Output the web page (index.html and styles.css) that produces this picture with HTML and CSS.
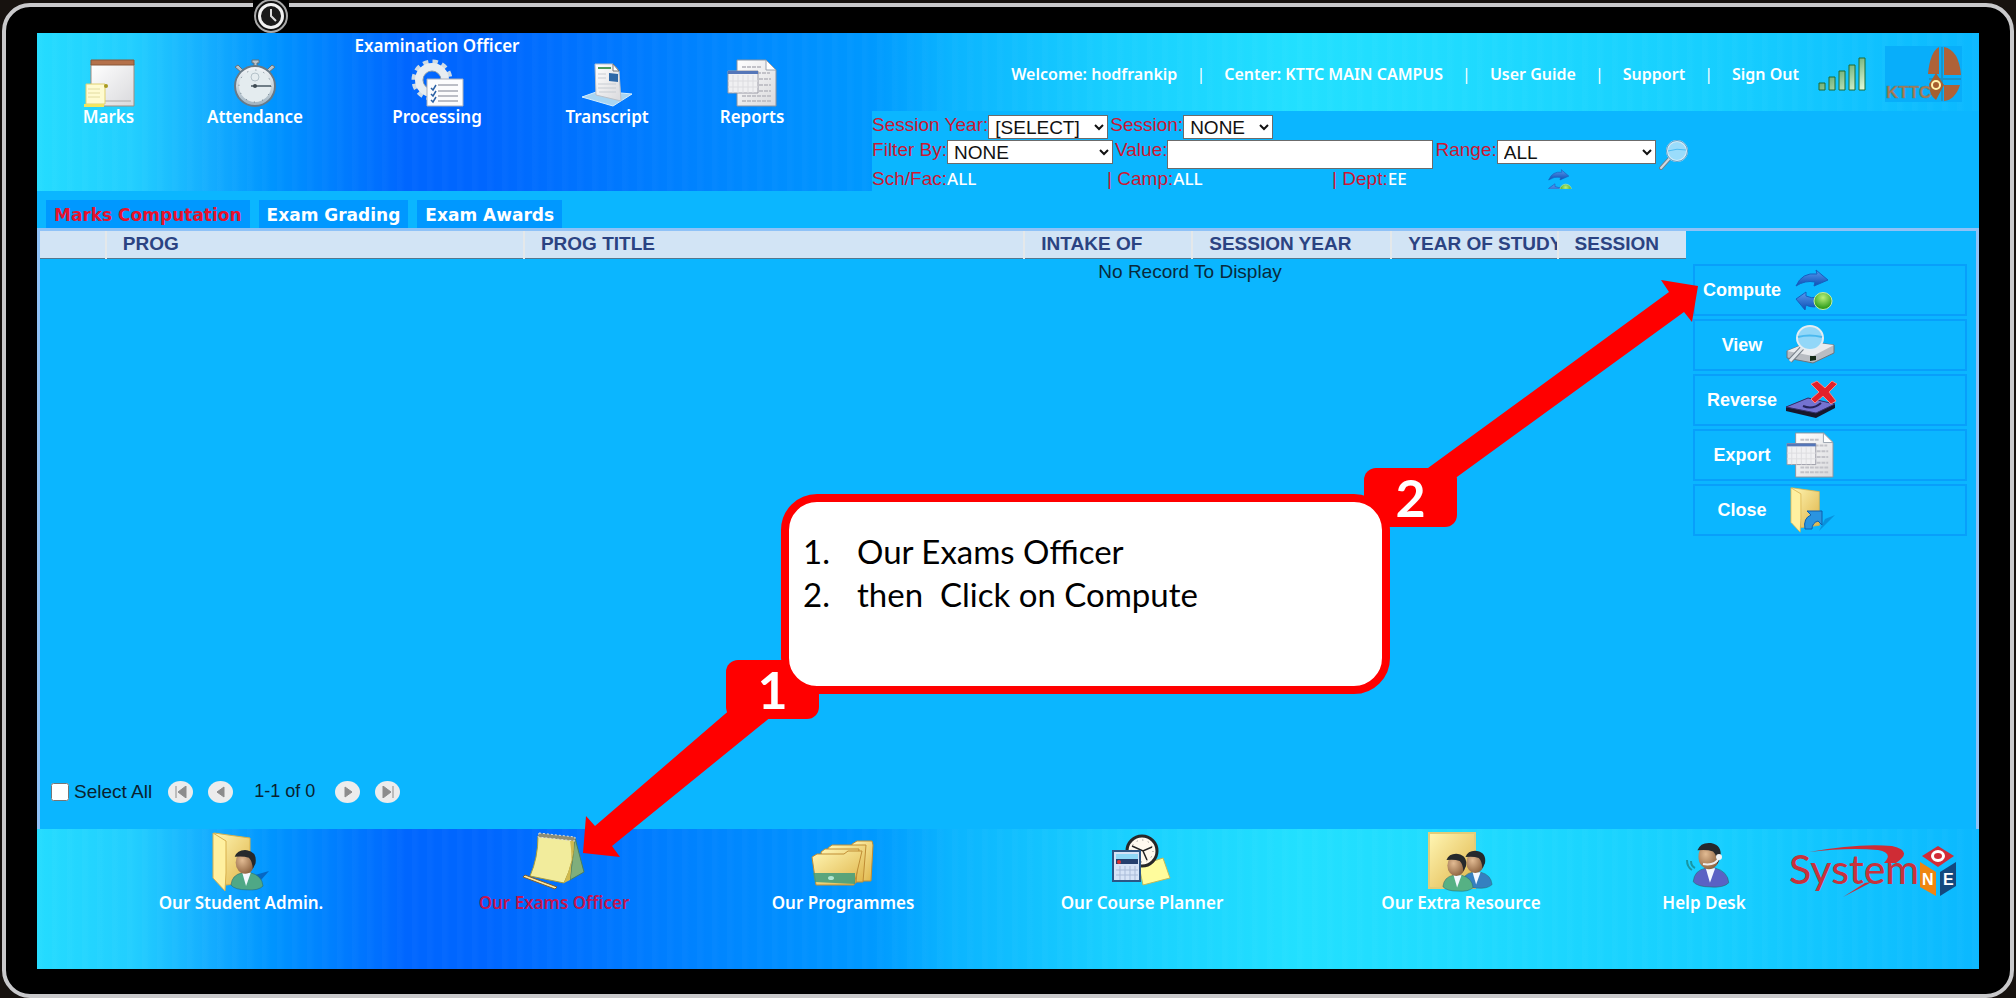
FILE: index.html
```html
<!DOCTYPE html>
<html lang="en">
<head>
<meta charset="utf-8">
<title>Examination Officer</title>
<link rel="stylesheet" href="styles.css">
</head>
<body>
<svg class="defs" aria-hidden="true">
  <defs>
    <linearGradient id="paper" x1="0" y1="0" x2="1" y2="1"><stop offset="0" stop-color="#fff"/><stop offset="1" stop-color="#d9d9dc"/></linearGradient>
    <linearGradient id="yellow" x1="0" y1="0" x2="1" y2="1"><stop offset="0" stop-color="#fff6b4"/><stop offset="1" stop-color="#dfb448"/></linearGradient>
    <linearGradient id="steel" x1="0" y1="0" x2="0" y2="1"><stop offset="0" stop-color="#f6f8fa"/><stop offset="1" stop-color="#9fb2bf"/></linearGradient>
    <linearGradient id="blue" x1="0" y1="0" x2="0" y2="1"><stop offset="0" stop-color="#5a9af0"/><stop offset="1" stop-color="#0d4fb4"/></linearGradient>
    <linearGradient id="green" x1="0" y1="0" x2="1" y2="1"><stop offset="0" stop-color="#1d7a30"/><stop offset="1" stop-color="#e8ffe0"/></linearGradient>
    <radialGradient id="ball" cx=".5" cy=".3" r=".7"><stop offset="0" stop-color="#b9f07a"/><stop offset="1" stop-color="#1f9410"/></radialGradient>
    <radialGradient id="skin" cx=".35" cy=".4" r=".8"><stop offset="0" stop-color="#e2bb93"/><stop offset="1" stop-color="#7a4e2c"/></radialGradient>
    <symbol id="report" viewBox="0 0 50 48">
      <path d="M10 1h29l10 10v36H10z" fill="url(#paper)" stroke="#8b93a0"/>
      <path d="M39 1v10h10z" fill="#fff" stroke="#9aa2ad"/>
      <path d="M15 8h20M15 14h28M32 20h12M32 26h12M32 32h12M15 37h29M15 42h29" stroke="#c2c2c8" stroke-width="2" stroke-dasharray="4 1"/>
      <path d="M1 12h30v22H1z" fill="#f0f0f2" stroke="#9a9aa5"/>
      <path d="M1 12h30v3H1z" fill="#5576b8"/>
      <path d="M6 16v18M11 16v18M16 16v18M21 16v18M26 16v18M1 22h30M1 28h30" stroke="#dcdce0"/>
    </symbol>
    <symbol id="sync" viewBox="0 0 38 42">
      <path d="M1 17Q7 3 22 5L21 1l12 10-14 6 1-4Q10 11 1 17z" fill="url(#blue)" stroke="#1560c0"/>
      <path d="M1 30l10-7v4q6 3 11 1l-2 10q-6 0-9-2l-1 5z" fill="url(#blue)" stroke="#1560c0"/>
      <ellipse cx="28" cy="32" rx="9" ry="8.500" fill="url(#ball)" stroke="#c7eea0"/>
    </symbol>
    <symbol id="folder" viewBox="0 0 40 60">
      <path d="M2 1l36 5v44l-24 3z" fill="url(#yellow)" stroke="#d8b04c"/>
      <path d="M1 1l13 8v32l-1 18L1 46z" fill="#fff0a0" stroke="#d8b04c"/>
    </symbol>
    <symbol id="person" viewBox="0 0 36 44">
      <path d="M1 38q1-11 12-13h9q12 3 13 14-5 5-17 4-13 0-17-5z" fill="currentColor" stroke="#2c6a72" stroke-width=".6"/>
      <path d="M13 25l4 14 5-14z" fill="#f4f8ff"/>
      <ellipse cx="16" cy="14" rx="10" ry="12" fill="url(#skin)"/>
      <path d="M5 8Q8 0 18 1q11 2 9 14l-3 6q0-8-4-12-6-2-15-1z" fill="#26292c"/>
    </symbol>
  </defs>
</svg>

<div class="device">
  <svg class="knob" viewBox="0 0 36 34" aria-hidden="true">
    <circle cx="18" cy="17" r="16" fill="#111" stroke="#aaa" stroke-width="2"/>
    <circle cx="18" cy="17" r="11.500" fill="#1b1b1b" stroke="#f2f2f2" stroke-width="3"/>
    <path d="M18 10v7l5 5" fill="none" stroke="#ddd" stroke-width="2"/>
  </svg>

  <div class="screen">
    <header class="header">
      <nav class="modules" aria-label="Modules">
        <a href="#marks"><span class="role"></span>
          <svg width="52" height="48" viewBox="0 0 52 48" aria-hidden="true"><path d="M8 5h43v42H8z" fill="url(#paper)" stroke="#a08d80"/><path d="M8 1h43v5H8z" fill="#b4714a" stroke="#8a5838"/><path d="M22 42h26" stroke="#aaa"/><path d="M3 25h19v20H3z" fill="#fffbd0" stroke="#e0d070"/><path d="M1 45h20v3H1z" fill="#f4e560"/><path d="M5 30h12M5 34h12M5 38h12" stroke="#e2dca0"/><circle cx="23" cy="27" r="2" fill="#a89a20"/></svg>
          Marks</a>
        <a href="#attendance"><span class="role"></span>
          <svg width="46" height="48" viewBox="0 0 46 48" aria-hidden="true"><path d="M20 1h7v3h-2v4h-3V4h-2zM3 8l3-2 6 6-2 2zM43 8l-3-2-6 6 2 2z" fill="#b9c4cc" stroke="#64727c"/><circle cx="23" cy="27" r="20" fill="url(#steel)" stroke="#687986" stroke-width="2"/><circle cx="23" cy="27" r="16" fill="#e4ecef" stroke="#6c7c87" stroke-dasharray="1 7.370"/><circle cx="23" cy="18" r="4" fill="none" stroke="#b4c2c9"/><path d="M19 27h20" stroke="#4a5a64" stroke-width="1.500"/><circle cx="23" cy="27" r="2" fill="#3d4a52"/></svg>
          Attendance</a>
        <a href="#processing"><span class="role">Examination Officer</span>
          <svg width="54" height="48" viewBox="0 0 54 48" aria-hidden="true"><circle cx="22" cy="21" r="18" fill="none" stroke="#cfdbe4" stroke-width="5" stroke-dasharray="5.300 4.120"/><circle cx="22" cy="21" r="13" fill="none" stroke="#e7edf1" stroke-width="8"/><circle cx="22" cy="21" r="9" fill="none" stroke="#8197ad"/><path d="M17 20h36v27H17z" fill="#fcfcfd" stroke="#a9afba"/><path d="M28 26h20M28 32h20M28 37h20M28 42h20" stroke="#a7a9b4" stroke-width="1.500"/><path d="M21 29l2 2 3-5M21 35l2 2 3-5M21 41l2 2 3-5" fill="none" stroke="#2d62a5" stroke-width="1.500"/></svg>
          Processing</a>
        <a href="#transcript"><span class="role"></span>
          <svg width="52" height="48" viewBox="0 0 52 48" aria-hidden="true"><path d="M1 38l17-6 33 3-19 12z" fill="#a8d5f2" stroke="#d7eefb"/><path d="M14 5h18l6 7 2 30-25-6z" fill="url(#paper)" stroke="#b9c0c8"/><path d="M32 5v7h6z" fill="#fff" stroke="#777"/><path d="M17 9h13" stroke="#4b9a5c" stroke-width="2"/><path d="M28 14l9 1v8l-9-1z" fill="#2e69a8"/><path d="M17 15h8M17 19h8M17 25h18M17 29h18M18 33h17" stroke="#c7ccd2"/></svg>
          Transcript</a>
        <a href="#reports"><span class="role"></span>
          <svg width="50" height="48" aria-hidden="true"><use href="#report"/></svg>
          Reports</a>
      </nav>

      <div class="header-side">
        <div class="userbar">
          <span>Welcome: hodfrankip</span><i>|</i>
          <span>Center: KTTC MAIN CAMPUS</span><i>|</i>
          <a href="#guide">User Guide</a><i>|</i>
          <a href="#support">Support</a><i>|</i>
          <a href="#signout">Sign Out</a>
          <svg class="signal" width="48" height="34" viewBox="0 0 48 34" aria-hidden="true"><g fill="url(#green)" stroke="#1c6b35"><path d="M1 26h6v7H1zM11 20h6v13h-6zM21 14h6v19h-6zM31 8h6v25h-6zM41 1h6v32h-6z"/></g></svg>
          <svg width="77" height="56" viewBox="0 0 77 56" role="img" aria-label="KTTC"><path d="M0 0h77v56H0z" fill="#08aefa"/><path d="M54 1q-9 5-11 27h11zM59 1q15 3 17 28H59zM59 39h16q-5 15-16 16z" fill="#ae6238"/><path d="M57 1v54M44 33h32" stroke="#1a94c8" stroke-width="2"/><path d="M51 27l8 12-8 15q-7-5-7-16z" fill="#a65f30"/><circle cx="51" cy="39" r="4" fill="none" stroke="#fff3ac" stroke-width="2"/><text x="1" y="52" font-family="Liberation Sans, sans-serif" font-size="17" fill="#b07a4c" stroke="#607f86" stroke-width=".5">KTTC</text></svg>
        </div>

        <form class="filters">
          <div class="filter-row">
            <label for="year">Session Year:</label><select id="year" class="w-year"><option>[SELECT]</option></select>
            <label for="session" class="near">Session:</label><select id="session" class="w-session"><option>NONE</option></select>
          </div>
          <div class="filter-row">
            <label for="filter">Filter By:</label><select id="filter" class="w-filter"><option>NONE</option></select>
            <label for="value" class="near">Value:</label><input id="value" type="text" class="w-value">
            <label for="range" class="near">Range:</label><select id="range" class="w-range"><option>ALL</option></select>
            <button type="button" class="plain" aria-label="Search"><svg width="30" height="30" viewBox="0 0 30 30" aria-hidden="true"><path d="M2 28l9-10" stroke="#6f7f8c" stroke-width="4" stroke-linecap="round"/><path d="M2 28l9-10" stroke="#cfd8df" stroke-width="2" stroke-linecap="round"/><circle cx="18" cy="11" r="10" fill="#9adcfb" stroke="#d8ecf6" stroke-width="2"/><circle cx="18" cy="11" r="10.500" fill="none" stroke="#5b9fca"/><path d="M9 11q9-3 18-1" stroke="#4fbdf3" fill="none"/></svg></button>
          </div>
          <div class="scope">
            <span>Sch/Fac:<b>ALL</b></span>
            <span>| Camp:<b>ALL</b></span>
            <span>| Dept:<b>EE</b></span>
            <button type="button" class="plain" aria-label="Refresh"><svg width="24" height="20" viewBox="0 0 38 31" preserveAspectRatio="none" aria-hidden="true"><use href="#sync" width="38" height="42"/></svg></button>
          </div>
        </form>
      </div>
    </header>

    <nav class="tabs" aria-label="Views">
      <a href="#computation" class="active">Marks Computation</a>
      <a href="#grading">Exam Grading</a>
      <a href="#awards">Exam Awards</a>
    </nav>

    <main class="workspace">
      <div class="list">
        <table>
          <colgroup><col class="c1"><col class="c2"><col class="c3"><col class="c4"><col class="c5"><col class="c6"><col class="c7"></colgroup>
          <thead><tr><th></th><th>PROG</th><th>PROG TITLE</th><th>INTAKE OF</th><th>SESSION YEAR</th><th>YEAR OF STUDY</th><th>SESSION</th></tr></thead>
          <tbody><tr><td colspan="3"></td><td colspan="4" class="empty">No Record To Display</td></tr></tbody>
        </table>
        <div class="pager">
          <input type="checkbox" id="all"><label for="all">Select All</label>
          <button type="button" aria-label="First page"><svg width="12" height="12" viewBox="0 0 12 12"><path d="M1 0v12M11 0v12L3 6z"/></svg></button>
          <button type="button" aria-label="Previous page"><svg width="12" height="12" viewBox="0 0 12 12"><path d="M9 1v10L2 6z"/></svg></button>
          <span>1-1 of 0</span>
          <button type="button" aria-label="Next page"><svg width="12" height="12" viewBox="0 0 12 12"><path d="M3 1v10l7-5z"/></svg></button>
          <button type="button" aria-label="Last page"><svg width="12" height="12" viewBox="0 0 12 12"><path d="M11 0v12M1 0v12l8-6z"/></svg></button>
        </div>
      </div>

      <aside class="actions">
        <button type="button"><span>Compute</span><svg width="50" height="42" viewBox="0 0 50 42" aria-hidden="true"><use href="#sync" x="10" width="38" height="42"/></svg></button>
        <button type="button"><span>View</span><svg width="50" height="40" viewBox="0 0 50 40" aria-hidden="true"><path d="M2 26l22-9 25 3v8L28 38 2 33z" fill="#b8bcc2" stroke="#6d737b"/><path d="M2 26l22-9 25 3-21 11z" fill="#e9ebee"/><path d="M25 31l6 0v4l-6 1z" fill="#142a16"/><path d="M5 36l13-14" stroke="#737c86" stroke-width="5"/><path d="M5 36l13-14" stroke="#dfe5ea" stroke-width="3"/><ellipse cx="25" cy="13" rx="13" ry="12" fill="#92d7f8" stroke="#e5edf2" stroke-width="2"/><path d="M13 12q11-3 24 0" stroke="#4ab9ef" stroke-width="2" fill="none"/></svg></button>
        <button type="button"><span>Reverse</span><svg width="52" height="40" viewBox="0 0 52 40" aria-hidden="true"><path d="M1 27l22-9 27 6v4L31 38 1 31z" fill="#17172c"/><path d="M1 27l22-9 27 6-19 9z" fill="#7472d0" stroke="#33306c"/><path d="M18 26q10 4 18-3" stroke="#25235c" stroke-width="2" fill="none"/><path d="M26 4l6-3 8 7 7-7 5 3-8 8 7 9-5 3-8-8-8 7-4-4 8-7z" fill="#e3202a" stroke="#f28a8a"/></svg></button>
        <button type="button"><span>Export</span><svg width="50" height="46" aria-hidden="true"><use href="#report"/></svg></button>
        <button type="button"><span>Close</span><svg width="50" height="46" viewBox="0 0 50 46" aria-hidden="true"><use href="#folder" x="5" width="31" height="46"/><path d="M34 44l16-16-10 4z" fill="#0878c4" opacity=".6"/><path d="M20 42q-2-11 6-14l-4-4h15v14l-4-4q-6 2-6 8z" fill="#2a94e0" stroke="#0d5fae"/></svg></button>
      </aside>
    </main>

    <footer class="footer">
      <a href="#student"><svg width="58" height="60" viewBox="0 0 58 60" aria-hidden="true"><path d="M42 56l15-17-14 4z" fill="#06469c" opacity=".6"/><use href="#folder" width="40" height="60"/><use href="#person" x="18" y="17" width="34" height="42" color="#4fa886"/></svg>Our Student Admin.</a>
      <a href="#exams" class="active"><svg width="64" height="60" viewBox="0 0 64 60" aria-hidden="true"><path d="M53 6l9 34-14 8z" fill="#7fae7c" stroke="#487d60"/><path d="M16 4l36 3q1 22-10 44l-34-7Q16 26 16 4z" fill="#f2ec9c" stroke="#a79c3c"/><path d="M48 8q3 20 0 40l-6 3Q52 28 52 7z" fill="#d0b94e"/><path d="M17 1l36 4v4L16 5z" fill="#8e8e74" stroke="#ddd" stroke-dasharray="2 2"/><path d="M1 45l32 12 2-2L3 43z" fill="#ffe79a" stroke="#7b5c30"/></svg>Our Exams Officer</a>
      <a href="#programmes"><svg width="64" height="60" viewBox="0 0 64 60" aria-hidden="true"><g fill="url(#yellow)" stroke="#c08d34"><path d="M41 12l5-3h15l1 4-2 36H41z"/><path d="M17 16l4-3h34l-3 37H20z"/><path d="M10 20l4-3h34l-3 34H14z"/><path d="M1 25l5-3h27l4-3h14l-8 34H5z"/></g><path d="M2 41h42v11L4 50z" fill="#3f9c7c" opacity=".85"/><ellipse cx="20" cy="46" rx="3" ry="2" fill="#b0e5d2"/></svg>Our Programmes</a>
      <a href="#planner"><svg width="60" height="60" viewBox="0 0 60 60" aria-hidden="true"><path d="M27 34l24-8 7 20-27 7z" fill="#fffc9c" stroke="#c2ba58"/><circle cx="30" cy="19" r="15" fill="#fff9ee" stroke="#282828" stroke-width="3"/><circle cx="30" cy="19" r="11" fill="none" stroke="#777" stroke-dasharray="1 4.760"/><path d="M20 14l11 5 9-4M31 19l4 9" stroke="#222" stroke-width="1.500" fill="none"/><path d="M1 19h27v30H1z" fill="#d6e3f6" stroke="#2d5685" stroke-width="2"/><path d="M4 22h22v5H4z" fill="#8fd8f6"/><path d="M4 27h22v5H4z" fill="#243f6e"/><circle cx="7" cy="30" r="2" fill="#d33"/><path d="M8 34v14M13 34v14M18 34v14M23 34v14M4 38h22M4 43h22" stroke="#a9bbd8"/></svg>Our Course Planner</a>
      <a href="#resource"><svg width="66" height="60" viewBox="0 0 66 60" aria-hidden="true"><path d="M1 1h46v55H1z" fill="url(#yellow)" stroke="#e2cc78" stroke-width="2"/><use href="#person" x="33" y="18" width="32" height="39" color="#3580c0"/><use href="#person" x="14" y="21" width="32" height="39" color="#56b184"/></svg>Our Extra Resource</a>
      <a href="#help"><svg width="58" height="60" viewBox="0 0 58 60" aria-hidden="true"><use href="#person" x="17" y="10" width="38" height="46" color="#5a62c4"/><path d="M28 32q12 2 16-6" stroke="#eee" stroke-width="2" fill="none"/><circle cx="44" cy="25" r="3" fill="#f4f4f4"/><path d="M16 29q0 5 4 7M12 28q0 7 5 10" stroke="#1896a4" fill="none" stroke-width="2"/></svg>Help Desk</a>
      <div class="brand"><svg width="168" height="56" viewBox="0 0 168 56" role="img" aria-label="System ONE"><path d="M20 8Q70-1 103 2q22 5 4 17H95q10-10-6-13Q60 3 20 8zM54 53l22-14 6-1-3 2z" fill="#cf2c35"/><text x="0" y="40" font-family="Lato, sans-serif" font-size="41" font-weight="500" fill="#c8323c">System</text><path d="M133 12l16-10 16 10-16 11z" fill="#d22b36"/><path d="M131 18l16 10v24l-16-9z" fill="#ee8511"/><path d="M151 28l16-10v24l-16 10z" fill="#14497e"/><ellipse cx="149" cy="12" rx="5.500" ry="4.500" fill="none" stroke="#fff" stroke-width="3"/><text class="cube" x="133" y="41">N</text><text class="cube" x="154" y="41">E</text></svg></div>
    </footer>
  </div>

  <section class="guide" aria-label="Steps">
    <svg class="arrows" width="1110" height="590" viewBox="0 0 1110 590" aria-hidden="true"><path d="M3 583l3-37 9 10L152 438l40 8L32 576l8 11zM1118 16l-37-6 8 12L848 198v30L1104 42l8 10z" fill="#f00"/></svg>
    <div class="badge one">1</div>
    <div class="badge two">2</div>
    <ol class="callout"><li>Our Exams Officer</li><li>then &nbsp;Click on Compute</li></ol>
  </section>
</div>
</body>
</html>
```

FILE: styles.css
```css
* { box-sizing: border-box; }

body {
  margin: 0;
  min-height: 100vh;
  display: flex;
  background: #17120f;
  font-family: "Liberation Sans", Arial, sans-serif;
  font-size: 19px;
}

a { color: inherit; text-decoration: none; }
svg { flex: none; }
.defs { position: absolute; width: 0; height: 0; }

.device {
  position: relative;
  flex: 1;
  display: flex;
  margin: 3px 2px 0;
  padding: 26px 31px 25px;
  border: 4px solid #c9c9cb;
  border-radius: 28px;
  background: #000;
}

.knob {
  position: absolute;
  left: 247px;
  top: -8px;
  width: 36px;
  height: 34px;
  background: #000;
}

.screen {
  flex: 1;
  min-width: 0;
  display: flex;
  flex-direction: column;
  background: #0bb6ff;
}

.header,
.footer {
  background-image:
    repeating-linear-gradient(90deg, rgba(255, 255, 255, 0.02) 0 4px, transparent 8px 15px),
    linear-gradient(90deg, #24dcff 0%, #22ceff 5%, #14acff 9%, #0095ff 12%, #0066ff 19%, #0066ff 23%, #0088ff 36%, #0099ff 43%, #0bb4ff 47%, #18ceff 55%, #22e0ff 65%, #20dcff 72%, #16ceff 87%, #0bb8ff 100%);
}

.header { display: flex; height: 158px; }

.modules {
  flex: 43 1 0;
  min-width: 0;
  display: grid;
  grid-template-columns: 143fr 150fr 214fr 126fr 164fr 38fr;
  color: #fff;
  font: 600 17px/20px "Noto Sans", sans-serif;
}

.modules a {
  display: flex;
  flex-direction: column;
  align-items: center;
  white-space: nowrap;
}

.role { height: 26px; padding-top: 3px; }

.header-side {
  flex: 57 1 0;
  min-width: 0;
  display: flex;
  flex-direction: column;
}

.userbar {
  height: 79px;
  display: flex;
  align-items: center;
  justify-content: flex-end;
  gap: 19px;
  padding: 4px 17px 0 0;
  color: #fff;
  font: 600 16px/22px "Noto Sans", sans-serif;
  white-space: nowrap;
}

.userbar i { font-style: normal; font-weight: 400; }

.filters {
  flex: 1;
  background: #0bb6ff;
  color: #cc1733;
  padding-top: 4px;
}

.filter-row {
  display: flex;
  align-items: flex-start;
  height: 25px;
  line-height: 20px;
  white-space: nowrap;
}

.near { margin-left: 2px; }

.filters select,
.filters input {
  height: 24px;
  padding: 0;
  border: 1px solid #6b6b6b;
  border-radius: 0;
  background-color: #fff;
  color: #111;
  font: 19px/22px "Liberation Sans", Arial, sans-serif;
}

.filters select { padding-left: 2px; }
.filters .w-value { width: 266px; height: 29px; }
.w-year { width: 120px; }
.w-session { width: 90px; }
.w-filter { width: 166px; }
.w-range { width: 159px; }

.plain {
  padding: 0;
  border: 0;
  background: none;
  margin-left: 3px;
  line-height: 0;
}

.scope {
  display: grid;
  grid-template-columns: 235px 225px 213px auto;
  justify-content: start;
  align-items: center;
  padding-top: 2px;
  line-height: 24px;
}

.scope b {
  color: #fff;
  font: 500 17px/24px "Noto Sans", sans-serif;
}

.tabs {
  display: flex;
  gap: 9px;
  padding: 9px 9px 0;
}

.tabs a {
  height: 28px;
  padding: 0 8px;
  background: #0098ff;
  color: #fff;
  font: bold 17px/30px "DejaVu Sans", sans-serif;
}

.tabs .active { color: #e8112d; }

.workspace {
  flex: 1;
  display: grid;
  grid-template-columns: minmax(0, 1646fr) minmax(0, 290fr);
  border: 3px solid #8fc2f7;
  border-bottom: 0;
}

.list {
  display: flex;
  flex-direction: column;
  justify-content: space-between;
}

table { width: 100%; table-layout: fixed; border-collapse: collapse; }
.c1 { width: 4%; }
.c2 { width: 25.400%; }
.c3 { width: 30.400%; }
.c4 { width: 10.200%; }
.c5 { width: 12.100%; }
.c6 { width: 10.100%; }
.c7 { width: 7.800%; }

th {
  height: 27px;
  padding: 0 0 0 16px;
  overflow: hidden;
  border-bottom: 1px solid #54788f;
  border-right: 2px solid #e4e8ea;
  background: #d2e4f5;
  color: #2b4382;
  text-align: left;
  line-height: 24px;
  white-space: nowrap;
}

th:last-child { border-right: 0; }
td { padding: 0; line-height: 26px; }
.empty { padding-left: 74px; color: #082a3c; }

.pager {
  display: flex;
  align-items: center;
  height: 75px;
  padding-left: 11px;
  color: #0a2230;
}

.pager input { width: 18px; height: 18px; margin: 0 5px 0 0; }
.pager label { margin-right: 16px; }
.pager span { margin: 0 20px 0 6px; font-size: 18px; }

.pager button {
  display: grid;
  place-items: center;
  width: 25px;
  height: 22px;
  margin-right: 15px;
  padding: 0;
  border: 0;
  border-radius: 50%;
  background: #ececec;
}

.pager path { fill: #8c8c8c; stroke: #8c8c8c; }

.actions {
  display: flex;
  flex-direction: column;
  gap: 3px;
  padding: 33px 9px 0 7px;
}

.actions button {
  display: flex;
  align-items: center;
  height: 52px;
  padding: 0 0 0 4px;
  border: 2px solid #089ffb;
  background: none;
  color: #fff;
  font: bold 18px/24px "Liberation Sans", Arial, sans-serif;
}

.actions span { width: 86px; text-align: center; }

.footer {
  display: grid;
  grid-template-columns: 408fr 218fr 360fr 238fr 400fr 86fr 232fr;
  height: 140px;
  padding-top: 3px;
  color: #fff;
  font: 600 17px/22px "Noto Sans", sans-serif;
}

.footer a {
  min-width: 0;
  display: flex;
  flex-direction: column;
  align-items: center;
  white-space: nowrap;
}

.footer .active { color: #c41450; }
.brand { padding: 12px 0 0 42px; }
.cube { font: bold 16px "Liberation Sans", sans-serif; fill: #fff; }

/* Annotation layer over the application */
.guide {
  position: absolute;
  left: 574px;
  top: 263px;
  width: 1110px;
  height: 590px;
  pointer-events: none;
}

.arrows { position: absolute; left: 0; top: 0; overflow: visible; }

.badge {
  position: absolute;
  width: 93px;
  height: 59px;
  border-radius: 12px;
  background: #f00;
  color: #fff;
  font: bold 52px/59px Lato, sans-serif;
  text-align: center;
}

.one { left: 146px; top: 390px; }
.two { left: 784px; top: 198px; }

.callout {
  position: absolute;
  left: 201px;
  top: 224px;
  width: 609px;
  height: 200px;
  margin: 0;
  padding: 28px 0 0 58px;
  border: 8px solid #f00;
  border-radius: 36px;
  background: #fff;
  color: #000;
  font: 33px/43px Lato, sans-serif;
  list-style: none;
  counter-reset: step;
}

.callout li { counter-increment: step; display: flex; margin-left: -44px; }
.callout li::before { content: counter(step) "."; width: 54px; }
```
